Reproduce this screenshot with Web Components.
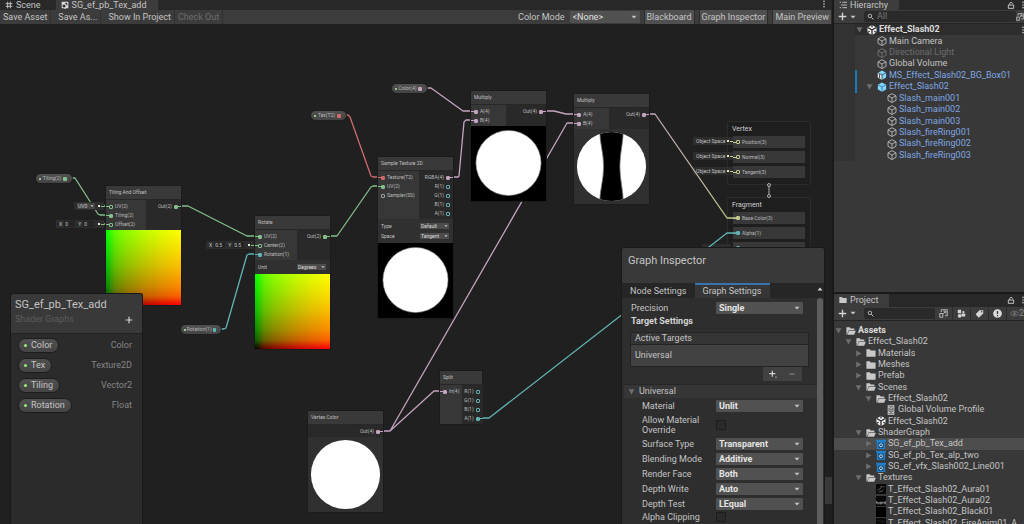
<!DOCTYPE html>
<html lang="en">
<head>
<meta charset="utf-8">
<title>SG_ef_pb_Tex_add</title>
<style>
  html, body { height: 100%; margin: 0; }
  body {
    --text: #c4c4c4;
    --dim: #6c6c6c;
    --panel: #383838;
    --bar: #3c3c3c;
    --dark: #282828;
    --v1: #62b3b3;
    --v2: #84be8b;
    --v3: #c3c98a;
    --v4: #c3a3c0;
    --t2: #cf6a6c;
    --ss: #a0a0a0;
    background: #1a1a1a;
    color: var(--text);
    font: 9px/11px Roboto, Inter, "Liberation Sans", sans-serif;
    overflow: hidden;
  }
</style>
</head>
<body>
<editor-app></editor-app>

<script>
const ICONS = {
  grid: '<path d="M4 1v10M8 1v10M1 4h10M1 8h10" stroke="#c4c4c4" stroke-width="1.4"/>',
  graph: '<path d="M1 1h10v10H8l-2 1-2-1H1z" fill="#d8d8d8"/><path d="M6 3.5h3v3M3 6l3 0v3H3z" stroke="#333" fill="#333"/>',
  kebab: '<g fill="#c4c4c4"><circle cx="6" cy="2" r="1.2"/><circle cx="6" cy="6" r="1.2"/><circle cx="6" cy="10" r="1.2"/></g>',
  list: '<path d="M1 2h2M5 2h7M3 6h9M1 10h2M5 10h7" stroke="#c4c4c4" stroke-width="1.4"/>',
  lock: '<path d="M2 6h8v5H2zM4 6V4a2.3 2.3 0 0 1 4.500 0" fill="none" stroke="#c4c4c4" stroke-width="1.5"/>',
  plus: '<path d="M6 1v10M1 6h10" stroke="#d4d4d4" stroke-width="1.8"/>',
  plusMenu: '<path d="M5 1v9M.5 5.500h9" stroke="#d4d4d4" stroke-width="1.8"/><path d="M9 10h3l-1.500 2z" fill="#d4d4d4"/>',
  minus: '<path d="M2 6h8" stroke="#8a8a8a" stroke-width="1.6"/>',
  down: '<path d="M1 3.500h10L6 9z" fill="#c4c4c4"/>',
  up: '<path d="M1 9h10L6 3z" fill="#d4d4d4"/>',
  open: '<path d="M1 2h10L6 11z" fill="#6e6e6e"/>',
  closed: '<path d="M2 1v10l9-5z" fill="#6e6e6e"/>',
  search: '<circle cx="5" cy="5" r="3" fill="none" stroke="#c4c4c4" stroke-width="1.5"/><path d="M7.500 7.500L11 11" stroke="#c4c4c4" stroke-width="1.7"/>',
  cube: '<path d="M6 .8l4.800 2.600v5.400L6 11.400 1.200 8.800V3.400zM1.200 3.400L6 6l4.800-2.600M6 6v5.400" fill="none" stroke="#b8b8b8" stroke-width="1.100"/>',
  prefab: '<path d="M6 .5l5 2.700v5.700l-5 2.700-5-2.700V3.200z" fill="#7fd6fd"/><path d="M1 3.200L6 6l5-2.800M6 6v5.500" fill="none" stroke="#2f6f93" stroke-width=".9"/>',
  model: '<path d="M6 .5l5 2.700v5.700l-5 2.700-5-2.700V3.200z" fill="#7fd6fd"/><path d="M1 3.200L6 6v5.600L1 8.900z" fill="#e0e0e0"/><path d="M1 3.200L6 6l5-2.800M6 6v5.500" fill="none" stroke="#383838" stroke-width=".9"/><path d="M3 5v5" stroke="#383838"/>',
  unity: '<path d="M6 0l5.400 3v6L6 12 .6 9V3z" fill="#f0f0f0"/><path d="M6 6V12M6 6L1 3M6 6l5-3" stroke="#222" stroke-width="1.500"/><path d="M6 0v3M.6 9l2.600-1.500M11.400 9L8.800 7.500" stroke="#222" stroke-width="1.400"/>',
  folder: '<path d="M.5 1.500h4l1.200 1.500h5.800v7.500H.5z" fill="#c8c8c8"/>',
  folderOpen: '<path d="M.5 10.500v-9h4L5.700 3H10v2H3.200L1.200 10z" fill="#c8c8c8"/><path d="M3.500 5.600h8.300l-2 5H1.500z" fill="#c8c8c8"/>',
  profile: '<path d="M2 0h8v12H2z" fill="#bdbdbd"/><path d="M6 3l2.500 1.400v3L6 8.800 3.500 7.400v-3zM3.500 4.400L6 6l2.500-1.600M6 6v2.800M3 1.500h6M3 10.500h6" fill="none" stroke="#555" stroke-width=".9"/>',
  shader: '<path d="M0 1h12v2H0zM1 3h10v9H1z" fill="#1f7fc9"/><path d="M3 4.500h6v6H3z" fill="#123f66"/><circle cx="6" cy="7.500" r="1.800" fill="none" stroke="#d7ecfb" stroke-width="1.100"/>',
  aura1: '<path d="M0 0h12v12H0z" fill="#080808"/><path d="M2 8c1-3 3-1 4-3s3-3 4-1M3 10c2-2 4 0 6-3M5 3l2 1" stroke="#666" fill="none"/>',
  aura2: '<path d="M0 0h12v12H0z" fill="#080808"/><path d="M0 6l1 3 1-2 1 3 2-3 1 3 1-3 1 2 2-2 1 3 1-4" stroke="#9a9a9a" fill="none"/>',
  black: '<path d="M0 0h12v12H0z" fill="#000"/>',
  fire: '<path d="M0 0h12v12H0z" fill="#0b0b0b"/><path d="M2 3h2M6 4h3M3 8h4" stroke="#333"/>',
  popout: '<path d="M3 4V1h8v8H8M1 6h4v5H1zM5.500 6.500L9 3M6 3h3v3" fill="none" stroke="#c4c4c4" stroke-width="1.200"/>',
  shapes: '<path d="M1 1h4.500v4.500H1zM6 6l5 0v4H6z" fill="#d4d4d4"/><circle cx="3.500" cy="9" r="2.500" fill="#d4d4d4"/><circle cx="8.500" cy="4" r="1.500" fill="#d4d4d4"/>',
  tag: '<path d="M6 1.500h5v4.500L5 11.500.800 7z" fill="#d4d4d4"/><circle cx="9" cy="3.500" r="1" fill="#3c3c3c"/>',
  alert: '<circle cx="6" cy="6" r="5.800" fill="#dcdcdc"/><path d="M6 2.500v4.300M6 8v1.600" stroke="#333" stroke-width="1.700"/>',
  eye: '<path d="M.5 6C3 2 9 2 11.500 6 9 10 3 10 .5 6z" fill="none" stroke="#777" stroke-width="1.300"/><circle cx="6" cy="6" r="1.800" fill="#777"/>'
};

class UiIcon extends HTMLElement {
  constructor() {
    super();
    this.attachShadow({ mode: 'open' });
  }

  connectedCallback() {
    this.shadowRoot.innerHTML = `
      <style>
        :host { display: block; flex: none; width: var(--size, 8px); height: var(--size, 8px); }
        svg { display: block; width: 100%; height: 100%; }
      </style>
      <svg viewBox="0 0 12 12" aria-hidden="true">${ICONS[this.getAttribute('name')] || ''}</svg>
    `;
  }
}

class ColorModeField extends HTMLElement {
  constructor() {
    super();
    this.attachShadow({ mode: 'open' });
    this.shadowRoot.innerHTML = `
      <style>
        :host { display: flex; align-items: center; gap: 5px; }
        .box { display: grid; align-items: center; width: 70px; }
        select {
          grid-area: 1 / 1; appearance: none; box-sizing: border-box; width: 100%; height: 12px;
          margin: 0; padding: 0 3px; border: 0; border-radius: 1px; background: #515151;
          color: #e0e0e0; font: inherit; line-height: 12px;
        }
        ui-icon { grid-area: 1 / 1; justify-self: end; margin-right: 3px; pointer-events: none; --size: 6px; }
      </style>
      <label for="mode">Color Mode</label>
      <div class="box">
        <select id="mode"><option>&lt;None&gt;</option></select>
        <ui-icon name="down"></ui-icon>
      </div>
    `;
  }
}

class SettingRow extends HTMLElement {
  constructor() {
    super();
    this.attachShadow({ mode: 'open' });
  }

  connectedCallback() {
    const label = this.getAttribute('label');
    const value = this.getAttribute('value');
    const field = value
      ? `<div class="box"><select id="f"><option>${value}</option></select><ui-icon name="down"></ui-icon></div>`
      : '<input id="f" type="checkbox">';
    this.shadowRoot.innerHTML = `
      <style>
        :host { display: flex; align-items: center; min-height: 15px; padding: 0 14px 0 var(--indent, 18px); }
        label { flex: 1; padding-right: 12px; line-height: 10px; }
        .field { flex: none; width: 87px; }
        .box { display: grid; align-items: center; }
        select {
          grid-area: 1 / 1; appearance: none; width: 100%; height: 12px; margin: 0; padding: 0 3px;
          border: 0; border-radius: 1px; background: #515151; color: #e4e4e4;
          font: inherit; font-weight: 700; line-height: 12px;
        }
        ui-icon { grid-area: 1 / 1; justify-self: end; margin-right: 3px; pointer-events: none; --size: 6px; }
        input {
          appearance: none; display: block; box-sizing: border-box; width: 10px; height: 10px;
          margin: 0; border: 1px solid #1c1c1c; border-radius: 1px; background: #2a2a2a;
        }
      </style>
      <label for="f">${label}</label>
      <div class="field">${field}</div>
    `;
  }
}

class DockTab extends HTMLElement {
  constructor() {
    super();
    this.attachShadow({ mode: 'open' });
    this.shadowRoot.innerHTML = `
      <style>
        :host { display: flex; align-items: center; gap: 3px; padding: 0 11px 0 5px; }
        :host([active]) { background: var(--bar); }
      </style>
      <slot></slot>
    `;
  }
}

class ToolButton extends HTMLElement {
  constructor() {
    super();
    this.attachShadow({ mode: 'open' });
  }

  connectedCallback() {
    const off = this.hasAttribute('disabled') ? 'disabled' : '';
    this.shadowRoot.innerHTML = `
      <style>
        :host { display: flex; }
        button {
          display: flex; align-items: center; margin: 0; padding: 1px 3px 0; border: 0;
          border-right: 1px solid #303030; background: none; color: var(--text);
          font: inherit; white-space: nowrap;
        }
        button:disabled { color: var(--dim); }
        :host([pressed]) button { background: #505050; border: 1px solid #2c2c2c; border-width: 0 1px; padding: 1px 2px 0; }
      </style>
      <button ${off}><slot></slot></button>
    `;
  }
}

class TreeRow extends HTMLElement {
  constructor() {
    super();
    this.attachShadow({ mode: 'open' });
  }

  connectedCallback() {
    const fold = this.getAttribute('fold') || '';
    this.shadowRoot.innerHTML = `
      <style>
        :host {
          display: flex; align-items: center; gap: 1px; min-width: 0; white-space: nowrap;
          padding-left: calc(${this.getAttribute('depth') || 0} * 10px + 1px);
        }
        :host([selected]) { background: #4d4d4d; }
        :host([scene]) { background: #2d2d2d; }
        :host([strong]) { font-weight: 700; color: #dcdcdc; }
        :host([off]) { color: var(--dim); }
        :host([off]) .icon { opacity: .45; }
        :host([linked]) { color: #7fa6e2; }
        :host([override]) { box-shadow: inset 2px 0 #1b7cb5; }
        .fold { --size: 7px; margin-right: 3px; }
        .icon { --size: 10px; margin-right: 1px; }
        .more { margin: 0 -3px 0 auto; --size: 8px; }
      </style>
      <ui-icon class="fold" name="${fold}"></ui-icon>
      <ui-icon class="icon" name="${this.getAttribute('icon')}"></ui-icon>
      <slot></slot>
      ${this.hasAttribute('scene') ? '<ui-icon class="more" name="kebab"></ui-icon>' : ''}
    `;
  }
}

class SidePanel extends HTMLElement {
  constructor() {
    super();
    this.attachShadow({ mode: 'open' });
    this.shadowRoot.innerHTML = `
      <style>
        :host { display: flex; flex-direction: column; min-height: 0; background: var(--panel); overflow: hidden; }
        .tabs { flex: none; display: flex; height: var(--tab-h, 10px); line-height: 9px; background: var(--dark); }
        .tabs ui-icon { --size: 8px; align-self: center; }
        .lock { margin: 0 4px 0 auto; }
        .menu { margin-right: -3px; }
        .tools { flex: none; display: flex; height: 14px; align-items: center; background: var(--bar); border-bottom: 1px solid #242424; box-sizing: border-box; }
      </style>
      <div class="tabs">
        <slot name="tab"></slot>
        <ui-icon class="lock" name="lock"></ui-icon>
        <ui-icon class="menu" name="kebab"></ui-icon>
      </div>
      <div class="tools"><slot name="tools"></slot></div>
      <slot></slot>
    `;
  }
}

class NodePort extends HTMLElement {
  constructor() {
    super();
    this.attachShadow({ mode: 'open' });
  }

  connectedCallback() {
    const type = this.getAttribute('type');
    this.shadowRoot.innerHTML = `
      <style>
        :host { display: flex; align-items: center; height: 9px; color: #bdbdbd; font-size: 5px; line-height: 9px; white-space: nowrap; }
        :host([out]) { flex-direction: row-reverse; }
        i { flex: none; width: 3px; height: 1px; }
        :host([linked]) i, :host([value]) i { background: var(--${type}); }
        b { flex: none; box-sizing: border-box; width: 4px; height: 4px; border: 1px solid var(--${type}); border-radius: 1px; }
        :host([linked]) b { background: var(--${type}); }
        span { padding: 0 2px; }
      </style>
      <i></i><b></b><span><slot></slot></span>
    `;
  }
}

class GraphNode extends HTMLElement {
  constructor() {
    super();
    this.attachShadow({ mode: 'open' });
  }

  connectedCallback() {
    this.shadowRoot.innerHTML = `
      <style>
        :host {
          position: absolute; left: var(--x); top: var(--y); width: var(--w, 75px);
          background: #303030; box-shadow: 0 0 0 1px #1b1b1b; font-size: 5px; line-height: 9px;
        }
        header { height: 13px; padding-left: 3px; background: #393939; border-bottom: 1px solid #272727; color: #c0c0c0; line-height: 13px; white-space: nowrap; }
        .ports { display: flex; }
        .in, .out { padding: 2px 0 1px; }
        .in { flex: 0 0 var(--in, 40px); background: #373737; }
        .out { flex: 1; background: #292929; }
      </style>
      <header>${this.getAttribute('heading')}</header>
      <div class="ports">
        <div class="in"><slot name="in"></slot></div>
        <div class="out"><slot name="out"></slot></div>
      </div>
      <slot></slot>
    `;
  }
}

class NodeOption extends HTMLElement {
  constructor() {
    super();
    this.attachShadow({ mode: 'open' });
  }

  connectedCallback() {
    this.shadowRoot.innerHTML = `
      <style>
        :host { display: flex; align-items: center; justify-content: space-between; height: 10px; padding: 0 4px 0 3px; }
        .box { display: grid; align-items: center; width: 29px; }
        select {
          grid-area: 1 / 1; appearance: none; width: 100%; height: 6px; margin: 0; padding: 0 1px;
          border: 0; background: #4c4c4c; color: #dedede; font: inherit; line-height: 6px;
        }
        ui-icon { grid-area: 1 / 1; justify-self: end; margin-right: 1px; --size: 4px; pointer-events: none; }
      </style>
      <label for="o">${this.getAttribute('label')}</label>
      <div class="box"><select id="o"><option>${this.getAttribute('value')}</option></select><ui-icon name="down"></ui-icon></div>
    `;
  }
}

const PREVIEWS = {
  uv: '<div class="uv"></div>',
  disc: '<svg viewBox="0 0 76 76"><path d="M0 0h76v76H0z"/><circle cx="38" cy="37.500" r="33" fill="#fff" stroke="#888" stroke-width=".6"/></svg>',
  sphere: '<svg viewBox="0 0 76 76"><circle cx="38" cy="38" r="35" fill="#fff"/></svg>',
  band: '<svg viewBox="0 0 76 76"><clipPath id="c"><circle cx="38" cy="38" r="35"/></clipPath><g clip-path="url(#c)"><path d="M0 0h76v76H0z" fill="#fff"/><path d="M26 0C26 14 30 24 30 38S26 62 26 76H50C50 62 46.500 52 46.500 38S50 14 50 0z" stroke="#777" stroke-width=".8"/></g></svg>'
};

class NodePreview extends HTMLElement {
  constructor() {
    super();
    this.attachShadow({ mode: 'open' });
  }

  connectedCallback() {
    this.shadowRoot.innerHTML = `
      <style>
        :host { display: block; }
        svg { display: block; width: 100%; }
        .uv {
          aspect-ratio: 1;
          background:
            linear-gradient(to right, #000, #610000 12%, #890000 25%, #bb0000 50%, #e00000 75%, #f00),
            linear-gradient(to top, #000, #006100 12%, #008900 25%, #00bb00 50%, #00e000 75%, #0f0);
          background-blend-mode: screen;
        }
      </style>
      ${PREVIEWS[this.getAttribute('kind')]}
    `;
  }
}

// Property pill, used on the canvas and in the blackboard
class PropertyPill extends HTMLElement {
  constructor() {
    super();
    this.attachShadow({ mode: 'open' });
  }

  connectedCallback() {
    const type = this.getAttribute('type');
    this.shadowRoot.innerHTML = `
      <style>
        :host {
          display: flex; align-items: center; box-sizing: border-box; height: 15px; padding: 0 6px 0 5px; gap: 4px;
          border: 1px solid #1d1d1d; border-radius: 8px; background: linear-gradient(#505050, #444);
        }
        :host([small]) {
          position: absolute; left: var(--x); top: var(--y); width: var(--w); height: 11px; padding: 0 5px 0 3px;
          justify-content: space-between; color: #b8b8b8; font-size: 5px; line-height: 9px; gap: 1px;
        }
        i { width: 3px; height: 3px; border-radius: 50%; background: #9cea76; }
        :host([small]) i { width: 2px; height: 2px; background: #b9e8a0; }
        b { width: 4px; height: 4px; border-radius: 1px; background: var(--${type}); }
      </style>
      <i></i><slot></slot>${type ? '<b></b>' : ''}
    `;
  }
}

// Default value shown beside an unconnected input
class PortValue extends HTMLElement {
  constructor() {
    super();
    this.attachShadow({ mode: 'open' });
  }

  connectedCallback() {
    const xy = this.getAttribute('xy');
    const pick = this.getAttribute('pick');
    let field = '<span><slot></slot></span>';
    if (xy !== null) {
      field = `<label>X <input value="${xy}"></label><label>Y <input value="${xy}"></label>`;
    } else if (pick) {
      field = `<div class="box"><select aria-label="Channel"><option>${pick}</option></select><ui-icon name="down"></ui-icon></div>`;
    }
    this.shadowRoot.innerHTML = `
      <style>
        :host {
          position: absolute; left: var(--x); top: var(--y); width: var(--w); height: 8px;
          display: flex; align-items: center; box-sizing: border-box; padding-left: 3px; background: #2d2d2d;
          color: #c4c4c4; font-size: 5px; line-height: 8px; white-space: nowrap;
        }
        label { display: flex; align-items: center; gap: 2px; margin-right: 3px; }
        input { box-sizing: border-box; width: 11px; height: 6px; margin: 0; padding: 0 1px; border: 0; background: #242424; color: inherit; font: inherit; line-height: 6px; }
        .box { display: grid; align-items: center; width: 18px; }
        select { grid-area: 1 / 1; appearance: none; width: 100%; height: 6px; margin: 0; padding: 0 1px; border: 0; background: #444; color: inherit; font: inherit; line-height: 6px; }
        ui-icon { grid-area: 1 / 1; justify-self: end; margin-right: 1px; --size: 4px; }
        i { margin-left: auto; width: 2px; height: 2px; background: #dfe8c8; }
        b { width: 3px; height: 1px; margin-left: 1px; background: var(--${this.getAttribute('type')}); }
      </style>
      ${field}<i></i><b></b>
    `;
  }
}

class StackContext extends HTMLElement {
  constructor() {
    super();
    this.attachShadow({ mode: 'open' });
    this.shadowRoot.innerHTML = `
      <style>
        :host {
          position: absolute; left: var(--x); top: var(--y); width: 84px; box-sizing: border-box;
          display: flex; flex-direction: column; gap: 3px; padding: 1px 5px 6px;
          border: 1px solid #2b2b2b; border-radius: 2px; background: #1e1e1e;
        }
        h3 { margin: 0 0 -2px -1px; font: inherit; font-size: 7px; line-height: 12px; color: #d0d0d0; }
        ::slotted(node-port) { height: 12px; background: #383838; }
      </style>
      <h3><slot name="title"></slot></h3>
      <slot></slot>
    `;
  }
}

class BlackboardPanel extends HTMLElement {
  constructor() {
    super();
    this.attachShadow({ mode: 'open' });
    const rows = [['Color', 'Color'], ['Tex', 'Texture2D'], ['Tiling', 'Vector2'], ['Rotation', 'Float']]
      .map(([name, type]) => `<li><property-pill>${name}</property-pill><span>${type}</span></li>`).join('');
    this.shadowRoot.innerHTML = `
      <style>
        :host {
          position: absolute; left: 10px; top: 269px; bottom: 0; width: 133px; box-sizing: border-box;
          border: 1px solid #191919; border-bottom: 0; border-radius: 3px 3px 0 0; background: #2b2b2b; overflow: hidden;
        }
        header { padding: 4px 9px 5px 4px; background: #393939; border-bottom: 1px solid #222; }
        h2 { margin: 0; font: inherit; font-size: 11px; line-height: 13px; }
        .sub { display: flex; justify-content: space-between; align-items: center; height: 17px; color: #5c5c5c; }
        button { margin: 0; padding: 0; border: 0; background: none; }
        ul { list-style: none; margin: 0; padding: 1px 10px 0 7px; }
        li { display: flex; justify-content: space-between; align-items: center; height: 20px; color: #858585; }
        property-pill { color: var(--text); }
      </style>
      <header>
        <h2>SG_ef_pb_Tex_add</h2>
        <div class="sub">Shader Graphs<button aria-label="Add property"><ui-icon name="plus"></ui-icon></button></div>
      </header>
      <ul>${rows}</ul>
    `;
  }
}

class InspectorPanel extends HTMLElement {
  constructor() {
    super();
    this.attachShadow({ mode: 'open' });
    this.shadowRoot.innerHTML = `
      <style>
        :host {
          position: absolute; right: 7px; top: 223px; bottom: 0; width: 204px; box-sizing: border-box;
          display: flex; flex-direction: column;
          border: 1px solid #191919; border-bottom: 0; border-radius: 3px 3px 0 0; background: #2e2e2e; overflow: hidden;
        }
        h2 { flex: none; height: 30px; margin: 0; padding: 5px 6px 0; background: #393939; font: inherit; font-size: 11px; line-height: 15px; }
        .tabs { flex: none; display: flex; height: 15px; background: #262626; }
        .tabs button { margin: 0; padding: 0 8px; border: 0; border-top: 2px solid transparent; background: none; color: var(--text); font: inherit; }
        .tabs .on { background: #363636; border-color: #3a72b0; }
        .tabs ui-icon { --size: 6px; margin: 3px 1px 0 auto; }
        .body { display: flex; flex: 1; min-height: 0; }
        .rows { flex: 1; min-width: 0; padding: 2px 0 0 2px; }
        .bar { flex: none; width: 6px; margin: 0 1px 0 0; border-radius: 3px 3px 0 0; background: #5e5e5e; }
        .precision { --indent: 7px; }
        h4 { margin: 0; padding-left: 7px; font: inherit; font-weight: 700; line-height: 12px; color: #d4d4d4; }
        .list { margin: 5px 8px 0 6px; }
        .cap, .item { padding: 0 4px; border: 1px solid #242424; line-height: 11px; background: #353535; }
        .item { border-top: 0; background: #414141; line-height: 21px; }
        .foot { display: flex; justify-content: space-around; width: 39px; height: 14px; margin: 0 7px 0 auto; align-items: center; background: #414141; }
        .foot button { margin: 0; padding: 0; border: 0; background: none; }
        .fold { display: flex; align-items: center; gap: 4px; height: 14px; margin: 3px 0 0; padding-left: 4px; background: #363636; border-top: 1px solid #262626; box-sizing: border-box; }
        .fold ui-icon { --size: 7px; }
        .tall { min-height: 23px; }
        .clip { min-height: 11px; }
      </style>
      <h2>Graph Inspector</h2>
      <div class="tabs"><button>Node Settings</button><button class="on">Graph Settings</button><ui-icon name="up"></ui-icon></div>
      <div class="body">
        <div class="rows">
          <setting-row class="precision" label="Precision" value="Single"></setting-row>
          <h4>Target Settings</h4>
          <div class="list">
            <div class="cap">Active Targets</div>
            <div class="item">Universal</div>
            <div class="foot">
              <button aria-label="Add target"><ui-icon name="plusMenu"></ui-icon></button>
              <button aria-label="Remove target"><ui-icon name="minus"></ui-icon></button>
            </div>
          </div>
          <div class="fold"><ui-icon name="open"></ui-icon>Universal</div>
          <setting-row label="Material" value="Unlit"></setting-row>
          <setting-row class="tall" label="Allow Material Override"></setting-row>
          <setting-row label="Surface Type" value="Transparent"></setting-row>
          <setting-row label="Blending Mode" value="Additive"></setting-row>
          <setting-row label="Render Face" value="Both"></setting-row>
          <setting-row label="Depth Write" value="Auto"></setting-row>
          <setting-row label="Depth Test" value="LEqual"></setting-row>
          <setting-row class="clip" label="Alpha Clipping"></setting-row>
        </div>
        <div class="bar"></div>
      </div>
    `;
  }
}

class GraphCanvas extends HTMLElement {
  constructor() {
    super();
    this.attachShadow({ mode: 'open' });
    this.shadowRoot.innerHTML = `
      <style>
        :host { display: block; position: relative; overflow: hidden; background: #202020; }
        .wires { position: absolute; left: 0; top: 0; width: 100%; height: 100%; fill: none; stroke-width: 1.3; stroke-linejoin: round; }
        .strip { position: absolute; right: 0; top: 453px; width: 8px; height: 27px; background: #393939; }
        .link { stroke: #b0b0b0; stroke-width: 1; }
      </style>

      <stack-context style="--x:727px;--y:97px">
        <span slot="title">Vertex</span>
        <node-port type="v3" value>Position(3)</node-port>
        <node-port type="v3" value>Normal(3)</node-port>
        <node-port type="v3" value>Tangent(3)</node-port>
      </stack-context>
      <stack-context style="--x:727px;--y:173px">
        <span slot="title">Fragment</span>
        <node-port type="v3" linked>Base Color(3)</node-port>
        <node-port type="v1" linked>Alpha(1)</node-port>
        <node-port type="v1"></node-port>
      </stack-context>
      <port-value type="v3" style="--x:693px;--y:113px;--w:40px">Object Space</port-value>
      <port-value type="v3" style="--x:693px;--y:128px;--w:40px">Object Space</port-value>
      <port-value type="v3" style="--x:693px;--y:143px;--w:40px">Object Space</port-value>
      <port-value type="v1" style="--x:702px;--y:220px;--w:29px"></port-value>

      <svg class="wires" aria-hidden="true">
        <defs>
          <linearGradient id="mix" gradientUnits="userSpaceOnUse" x1="645" y1="90" x2="727" y2="193">
            <stop offset="0" stop-color="#c3a3c0"/><stop offset="1" stop-color="#c3c98a"/>
          </linearGradient>
        </defs>
        <g stroke="#84be8b">
          <path d="M72 154h3L98 190l2 1h8M180 182h8L247 212h9M330 212h7L371 163l2-1h6M103 182h4M103 200h4M251 221h5"/>
        </g>
        <g stroke="#62b3b3"><path d="M221 305h3l2-1L247 231l2-1h7M482 394h7L727 209h9"/></g>
        <g stroke="#cf6a6c"><path d="M346 91h2l2 2L371 152l2 1h6"/></g>
        <g stroke="#c3a3c0">
          <path d="M427 64h4L463 87h9M452 153h6l1-1L464 98l2-2h6M545 87h9l12 3h9M383 407h7L567 99h8M390 407L434 367h7"/>
        </g>
        <path stroke="url(#mix)" d="M648 90h7L727 194h9"/>
        <g class="link"><path d="M769 162v8"/><circle cx="769" cy="161" r="1.500"/><circle cx="769" cy="172" r="1.500"/></g>
      </svg>

      <property-pill small type="v2" style="--x:35px;--y:149px;--w:38px">Tiling(2)</property-pill>
      <property-pill small type="v1" style="--x:180px;--y:300px;--w:42px">Rotation(1)</property-pill>
      <property-pill small type="t2" style="--x:310px;--y:86px;--w:37px">Tex(T2)</property-pill>
      <property-pill small type="v4" style="--x:391px;--y:59px;--w:37px">Color(4)</property-pill>

      <port-value pick="UV0" type="v2" style="--x:74px;--y:178px;--w:30px"></port-value>
      <port-value xy="0" type="v2" style="--x:56px;--y:196px;--w:48px"></port-value>
      <port-value xy="0.5" type="v2" style="--x:206px;--y:217px;--w:48px"></port-value>

      <graph-node heading="Tiling And Offset" style="--x:106px;--y:162px">
        <node-port slot="in" type="v2" value>UV(2)</node-port>
        <node-port slot="in" type="v2" linked>Tiling(2)</node-port>
        <node-port slot="in" type="v2" value>Offset(2)</node-port>
        <node-port slot="out" type="v2" out linked>Out(2)</node-port>
        <node-preview kind="uv"></node-preview>
      </graph-node>

      <graph-node heading="Rotate" style="--x:255px;--y:192px;--in:42px">
        <node-port slot="in" type="v2" linked>UV(2)</node-port>
        <node-port slot="in" type="v2" value>Center(2)</node-port>
        <node-port slot="in" type="v1" linked>Rotation(1)</node-port>
        <node-port slot="out" type="v2" out linked>Out(2)</node-port>
        <node-option label="Unit" value="Degrees" style="padding-block:2px"></node-option>
        <node-preview kind="uv"></node-preview>
      </graph-node>

      <graph-node heading="Sample Texture 2D" style="--x:378px;--y:133px;--in:41px">
        <node-port slot="in" type="t2" linked>Texture(T2)</node-port>
        <node-port slot="in" type="v2" linked>UV(2)</node-port>
        <node-port slot="in" type="ss">Sampler(SS)</node-port>
        <node-port slot="out" type="v4" out linked>RGBA(4)</node-port>
        <node-port slot="out" type="v1" out>R(1)</node-port>
        <node-port slot="out" type="v1" out>G(1)</node-port>
        <node-port slot="out" type="v1" out>B(1)</node-port>
        <node-port slot="out" type="v1" out>A(1)</node-port>
        <node-option label="Type" value="Default" style="padding-top:2px"></node-option>
        <node-option label="Space" value="Tangent" style="padding-bottom:2px"></node-option>
        <node-preview kind="disc"></node-preview>
      </graph-node>

      <graph-node heading="Multiply" style="--x:471px;--y:67px;--in:35px">
        <node-port slot="in" type="v4" linked>A(4)</node-port>
        <node-port slot="in" type="v4" linked>B(4)</node-port>
        <node-port slot="out" type="v4" out linked>Out(4)</node-port>
        <node-preview kind="disc"></node-preview>
      </graph-node>

      <graph-node heading="Multiply" style="--x:574px;--y:70px;--in:35px">
        <node-port slot="in" type="v4" linked>A(4)</node-port>
        <node-port slot="in" type="v4" linked>B(4)</node-port>
        <node-port slot="out" type="v4" out linked>Out(4)</node-port>
        <node-preview kind="band"></node-preview>
      </graph-node>

      <graph-node heading="Vertex Color" style="--x:308px;--y:387px;--in:0px">
        <node-port slot="out" type="v4" out linked>Out(4)</node-port>
        <node-preview kind="sphere"></node-preview>
      </graph-node>

      <graph-node heading="Split" style="--x:440px;--y:347px;--w:42px;--in:22px">
        <node-port slot="in" type="v4" linked>In(4)</node-port>
        <node-port slot="out" type="v1" out>R(1)</node-port>
        <node-port slot="out" type="v1" out>G(1)</node-port>
        <node-port slot="out" type="v1" out>B(1)</node-port>
        <node-port slot="out" type="v1" out linked>A(1)</node-port>
      </graph-node>

      <div class="strip"></div>
      <blackboard-panel></blackboard-panel>
      <inspector-panel></inspector-panel>
    `;
  }
}

class EditorApp extends HTMLElement {
  constructor() {
    super();
    this.attachShadow({ mode: 'open' });
    this.shadowRoot.innerHTML = `
      <style>
        :host { display: grid; grid-template-columns: minmax(0, 1fr) 190px; gap: 2px; height: 100vh; }
        .main { display: flex; flex-direction: column; min-height: 0; }
        .tabs { flex: none; display: flex; height: 10px; line-height: 9px; background: var(--dark); }
        .tabs ui-icon { --size: 8px; }
        .tabs .menu { margin: 0 4px 0 auto; }
        .tabs dock-tab:first-child { padding-right: 15px; }
        .toolbar { flex: none; display: flex; gap: 4px; height: 14px; background: var(--bar); align-items: stretch; }
        .toolbar .pair { display: flex; }
        .toolbar color-mode-field { margin-left: auto; }
        graph-canvas { flex: 1; }
        .dock { display: flex; flex-direction: column; gap: 2px; min-height: 0; }
        .hierarchy { flex: 293; }
        .project { flex: 231; --tab-h: 13px; }
        .add { display: flex; align-items: center; gap: 3px; margin: 0; padding: 0 8px 0 4px; border: 0; background: none; --size: 9px; }
        .add ui-icon + ui-icon { --size: 6px; }
        .search { display: flex; align-items: center; flex: 1; min-width: 0; gap: 3px; height: 11px; padding: 0 3px; background: #2a2a2a; border-radius: 2px; }
        .search ui-icon { --size: 7px; }
        .search input { flex: 1; min-width: 0; height: 11px; margin: 0; padding: 0; border: 0; background: none; color: var(--text); font: inherit; }
        .search input::placeholder { color: #777; opacity: 1; }
        .tool { display: flex; align-items: center; height: 13px; margin: 0; padding: 0 4px; border: 0; border-left: 1px solid #2c2c2c; background: none; color: #8a8a8a; font: inherit; }
        .tool ui-icon { --size: 9px; }
        .tree { flex: none; display: grid; grid-auto-rows: 1fr; }
        .scene { height: 137px; padding-left: 21px; background: linear-gradient(to right, #323232 21px, transparent 21px); }
        .assets { height: 204px; padding-top: 4px; }
      </style>
      <div class="main">
        <div class="tabs">
          <dock-tab><ui-icon name="grid"></ui-icon>Scene</dock-tab>
          <dock-tab active><ui-icon name="graph"></ui-icon>SG_ef_pb_Tex_add</dock-tab>
          <ui-icon class="menu" name="kebab"></ui-icon>
        </div>
        <div class="toolbar">
          <tool-button>Save Asset</tool-button>
          <tool-button>Save As...</tool-button>
          <div class="pair"><tool-button>Show In Project</tool-button><tool-button disabled>Check Out</tool-button></div>
          <color-mode-field></color-mode-field>
          <tool-button pressed>Blackboard</tool-button>
          <tool-button pressed>Graph Inspector</tool-button>
          <tool-button pressed>Main Preview</tool-button>
        </div>
        <graph-canvas></graph-canvas>
      </div>
      <div class="dock">
        <side-panel class="hierarchy">
          <dock-tab slot="tab" active><ui-icon name="list"></ui-icon>Hierarchy</dock-tab>
          <button slot="tools" class="add" aria-label="Create"><ui-icon name="plus"></ui-icon><ui-icon name="down"></ui-icon></button>
          <div slot="tools" class="search"><ui-icon name="search"></ui-icon><input aria-label="Search hierarchy" placeholder="All"></div>
          <ui-icon slot="tools" name="popout"></ui-icon>
          <div class="tree scene">
            <tree-row scene strong fold="open" icon="unity">Effect_Slash02</tree-row>
            <tree-row depth="1" icon="cube">Main Camera</tree-row>
            <tree-row depth="1" icon="cube" off>Directional Light</tree-row>
            <tree-row depth="1" icon="cube">Global Volume</tree-row>
            <tree-row depth="1" icon="model" linked override>MS_Effect_Slash02_BG_Box01</tree-row>
            <tree-row depth="1" fold="open" icon="prefab" linked override>Effect_Slash02</tree-row>
            <tree-row depth="2" icon="cube" linked>Slash_main001</tree-row>
            <tree-row depth="2" icon="cube" linked>Slash_main002</tree-row>
            <tree-row depth="2" icon="cube" linked>Slash_main003</tree-row>
            <tree-row depth="2" icon="cube" linked>Slash_fireRing001</tree-row>
            <tree-row depth="2" icon="cube" linked>Slash_fireRing002</tree-row>
            <tree-row depth="2" icon="cube" linked>Slash_fireRing003</tree-row>
          </div>
        </side-panel>
        <side-panel class="project">
          <dock-tab slot="tab" active><ui-icon name="folder"></ui-icon>Project</dock-tab>
          <button slot="tools" class="add" aria-label="Create"><ui-icon name="plus"></ui-icon><ui-icon name="down"></ui-icon></button>
          <div slot="tools" class="search"><ui-icon name="search"></ui-icon><input aria-label="Search project"></div>
          <button slot="tools" class="tool" aria-label="Open search"><ui-icon name="popout"></ui-icon></button>
          <button slot="tools" class="tool" aria-label="Filter by type"><ui-icon name="shapes"></ui-icon></button>
          <button slot="tools" class="tool" aria-label="Filter by label"><ui-icon name="tag"></ui-icon></button>
          <button slot="tools" class="tool" aria-label="Log"><ui-icon name="alert"></ui-icon></button>
          <button slot="tools" class="tool" style="padding:0 0 0 3px"><ui-icon name="eye"></ui-icon>2</button>
          <div class="tree assets">
            <tree-row strong fold="open" icon="folderOpen">Assets</tree-row>
            <tree-row depth="1" fold="open" icon="folderOpen">Effect_Slash02</tree-row>
            <tree-row depth="2" fold="closed" icon="folder">Materials</tree-row>
            <tree-row depth="2" fold="closed" icon="folder">Meshes</tree-row>
            <tree-row depth="2" fold="closed" icon="folder">Prefab</tree-row>
            <tree-row depth="2" fold="open" icon="folderOpen">Scenes</tree-row>
            <tree-row depth="3" fold="open" icon="folderOpen">Effect_Slash02</tree-row>
            <tree-row depth="4" icon="profile">Global Volume Profile</tree-row>
            <tree-row depth="3" icon="unity">Effect_Slash02</tree-row>
            <tree-row depth="2" fold="open" icon="folderOpen">ShaderGraph</tree-row>
            <tree-row depth="3" fold="closed" icon="shader" selected>SG_ef_pb_Tex_add</tree-row>
            <tree-row depth="3" fold="closed" icon="shader">SG_ef_pb_Tex_alp_two</tree-row>
            <tree-row depth="3" fold="closed" icon="shader">SG_ef_vfx_Slash002_Line001</tree-row>
            <tree-row depth="2" fold="open" icon="folderOpen">Textures</tree-row>
            <tree-row depth="3" icon="aura1">T_Effect_Slash02_Aura01</tree-row>
            <tree-row depth="3" icon="aura2">T_Effect_Slash02_Aura02</tree-row>
            <tree-row depth="3" icon="black">T_Effect_Slash02_Black01</tree-row>
            <tree-row depth="3" icon="fire">T_Effect_Slash02_FireAnim01_A</tree-row>
          </div>
        </side-panel>
      </div>
    `;
  }
}

customElements.define('ui-icon', UiIcon);
customElements.define('color-mode-field', ColorModeField);
customElements.define('setting-row', SettingRow);
customElements.define('dock-tab', DockTab);
customElements.define('tool-button', ToolButton);
customElements.define('tree-row', TreeRow);
customElements.define('side-panel', SidePanel);
customElements.define('node-port', NodePort);
customElements.define('graph-node', GraphNode);
customElements.define('node-option', NodeOption);
customElements.define('node-preview', NodePreview);
customElements.define('property-pill', PropertyPill);
customElements.define('port-value', PortValue);
customElements.define('stack-context', StackContext);
customElements.define('blackboard-panel', BlackboardPanel);
customElements.define('inspector-panel', InspectorPanel);
customElements.define('graph-canvas', GraphCanvas);
customElements.define('editor-app', EditorApp);
</script>
</body>
</html>
